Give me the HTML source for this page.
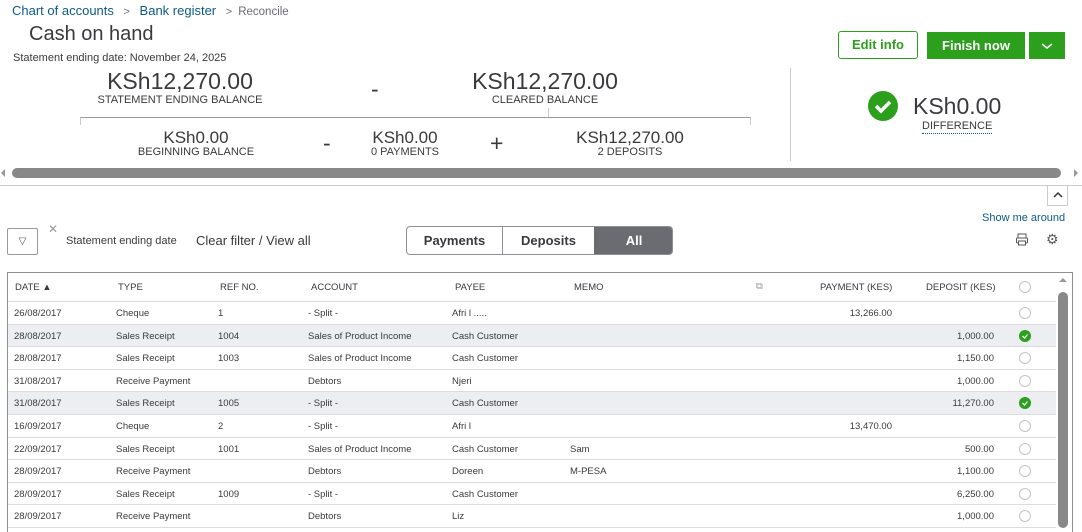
<!DOCTYPE html><html><head><style>
*{margin:0;padding:0;box-sizing:border-box}
body{width:1082px;height:528px;overflow:hidden;background:#fff;font-family:"Liberation Sans",sans-serif;color:#393a3d;position:relative}
.a{position:absolute;white-space:nowrap}
.c{text-align:center}
.big{font-size:23px;color:#393a3d}
.med{font-size:17px}
.lb{font-size:11px;color:#393a3d}
.row{position:absolute;left:8px;width:1048px;height:22.6px;border-bottom:1px solid #dcdcdc;font-size:9.5px;color:#393a3d}
.row span{position:absolute;top:6px}
.sh{background:#eceef1}
.circ{position:absolute;left:1011px;top:5px;width:12px;height:12px;border:1px solid #c4c4c4;border-radius:50%;background:#fff}
.chk{position:absolute;left:1011px;top:5px;width:12px;height:12px;border-radius:50%;background:#2ca01c}
.r{text-align:right}
</style></head><body>
<div class="a" style="left:12px;top:3px;font-size:13px;color:#0d5a8a">Chart of accounts <span style="color:#6b6c72;font-size:11px;margin:0 6px">&gt;</span> Bank register <span style="color:#6b6c72;font-size:11px;margin:0 6px">&gt;</span><span style="color:#6b6c72;font-size:11.5px">Reconcile</span></div>
<div class="a" style="left:29px;top:23px;font-size:20px;color:#393a3d">Cash on hand</div>
<div class="a" style="left:13px;top:52px;font-size:11px">Statement ending date: November 24, 2025</div>
<div class="a c big" style="left:80px;top:68px;width:200px">KSh12,270.00</div>
<div class="a c lb" style="left:80px;top:94px;width:200px">STATEMENT ENDING BALANCE</div>
<div class="a big" style="left:371px;top:76px">-</div>
<div class="a c big" style="left:445px;top:68px;width:200px">KSh12,270.00</div>
<div class="a c lb" style="left:445px;top:94px;width:200px">CLEARED BALANCE</div>
<div class="a" style="left:80px;top:117px;width:671px;height:8px;border-top:1px solid #999;border-left:1px solid #ccc;border-right:1px solid #ccc"></div>
<div class="a" style="left:548px;top:108px;width:1px;height:9px;background:#ccc"></div>
<div class="a c med" style="left:96px;top:128px;width:200px">KSh0.00</div>
<div class="a c lb" style="left:96px;top:146px;width:200px">BEGINNING BALANCE</div>
<div class="a big" style="left:323px;top:130px">-</div>
<div class="a c med" style="left:355px;top:128px;width:100px">KSh0.00</div>
<div class="a c lb" style="left:355px;top:146px;width:100px">0 PAYMENTS</div>
<div class="a big" style="left:490px;top:130px">+</div>
<div class="a c med" style="left:530px;top:128px;width:200px">KSh12,270.00</div>
<div class="a c lb" style="left:530px;top:146px;width:200px">2 DEPOSITS</div>
<div class="a" style="left:790px;top:68px;width:1px;height:93px;background:#ccc"></div>
<div class="a" style="left:838px;top:31px;width:80px;height:28px;border:1px solid #2ca01c;border-radius:3px;color:#2ca01c;font-size:13px;font-weight:bold;text-align:center;line-height:26px">Edit info</div>
<div class="a" style="left:927px;top:32px;width:98px;height:27px;background:#2ca01c;color:#fff;font-size:13px;font-weight:bold;text-align:center;line-height:27px">Finish now</div>
<div class="a" style="left:1029px;top:32px;width:36px;height:27px;background:#2ca01c"><svg width="36" height="27"><path d="M13 12l5 4 5-4" stroke="#fff" stroke-width="1.5" fill="none"/></svg></div>
<div class="a" style="left:868px;top:91px;width:30px;height:30px;border-radius:50%;background:#2ca01c"><svg width="30" height="30"><path d="M8 15l5 5 9-9" stroke="#fff" stroke-width="3.5" fill="none"/></svg></div>
<div class="a" style="left:913px;top:93px;font-size:23px">KSh0.00</div>
<div class="a" style="left:922px;top:120px;font-size:11px;border-bottom:1px dotted #0d5a8a;line-height:13px">DIFFERENCE</div>
<div class="a" style="left:1px;top:169px;border:4px solid transparent;border-right-color:#999;border-left:0"></div>
<div class="a" style="left:12px;top:168px;width:1049px;height:10px;background:#888;border-radius:5px"></div>
<div class="a" style="left:1074px;top:169px;border:4px solid transparent;border-left-color:#999;border-right:0"></div>
<div class="a" style="left:0;top:185px;width:1082px;height:1px;background:#ccc"></div>
<div class="a" style="left:1047px;top:185px;width:21px;height:21px;border:1px solid #ccc;border-top:0"><svg width="20" height="20"><path d="M6 12l4-4 4 4" stroke="#333" stroke-width="1.5" fill="none"/></svg></div>
<div class="a" style="left:982px;top:212px;font-size:11px;color:#0d5a8a">Show me around</div>
<div class="a" style="left:7px;top:228px;width:31px;height:27px;border:1px solid #999;border-radius:2px;font-size:10px;text-align:center;line-height:25px;color:#555">▽</div>
<div class="a" style="left:48px;top:222px;font-size:12px;color:#999">✕</div>
<div class="a" style="left:66px;top:235px;font-size:11px">Statement ending date</div>
<div class="a" style="left:196px;top:233px;font-size:13px">Clear filter / View all</div>
<div class="a" style="left:406px;top:226px;width:267px;height:29px;border:1px solid #8d9096;border-radius:4px;overflow:hidden;font-size:13px;font-weight:bold">
<div class="a c" style="left:0;top:0;width:96px;height:27px;line-height:27px;border-right:1px solid #8d9096">Payments</div>
<div class="a c" style="left:96px;top:0;width:91px;height:27px;line-height:27px">Deposits</div>
<div class="a c" style="left:187px;top:0;width:80px;height:27px;line-height:27px;background:#6b6c72;color:#fff">All</div></div>
<div class="a" style="left:1015px;top:232px"><svg width="16" height="16"><rect x="3" y="2" width="8" height="4" fill="none" stroke="#555"/><rect x="1.5" y="6" width="11" height="5" rx="1" fill="none" stroke="#555"/><rect x="3.5" y="9" width="7" height="4" fill="#fff" stroke="#555"/></svg></div>
<div class="a" style="left:1046px;top:231px;font-size:14px;color:#555">⚙</div>
<div class="a" style="left:7px;top:272px;width:1066px;height:260px;border:1px solid #8d9096;border-bottom:0"></div>
<div class="row" style="top:273px;height:29px;font-size:9.5px;color:#393a3d;font-weight:normal">
<span style="left:7px;top:9px">DATE ▲</span><span style="left:110px;top:9px">TYPE</span><span style="left:212px;top:9px">REF NO.</span><span style="left:303px;top:9px">ACCOUNT</span><span style="left:447px;top:9px">PAYEE</span><span style="left:566px;top:9px">MEMO</span><span style="left:748px;top:8px;color:#999">⧉</span><span style="left:812px;top:9px">PAYMENT (KES)</span><span style="left:918px;top:9px">DEPOSIT (KES)</span><div class="circ" style="top:8px"></div></div>
<div class="a" style="left:1058px;top:292px;width:10px;height:236px;background:#888;border-radius:5px"></div>
<div class="a" style="left:1059px;top:278px;border:4px solid transparent;border-bottom-color:#999;border-top:0"></div>
<div class="row" style="top:302px"><span style="left:6px">26/08/2017</span><span style="left:108px">Cheque</span><span style="left:210px">1</span><span style="left:300px">- Split -</span><span style="left:444px">Afri l  .....</span><span class="r" style="left:784px;width:100px">13,266.00</span><div class="circ"></div></div>
<div class="row sh" style="top:324.6px"><span style="left:6px">28/08/2017</span><span style="left:108px">Sales Receipt</span><span style="left:210px">1004</span><span style="left:300px">Sales of Product Income</span><span style="left:444px">Cash Customer</span><span class="r" style="left:886px;width:100px">1,000.00</span><div class="chk"><svg width="12" height="12" style="position:absolute;left:0;top:0"><path d="M3.5 6l2 2 3-3.5" stroke="#fff" stroke-width="1.3" fill="none"/></svg></div></div>
<div class="row" style="top:347.2px"><span style="left:6px">28/08/2017</span><span style="left:108px">Sales Receipt</span><span style="left:210px">1003</span><span style="left:300px">Sales of Product Income</span><span style="left:444px">Cash Customer</span><span class="r" style="left:886px;width:100px">1,150.00</span><div class="circ"></div></div>
<div class="row" style="top:369.8px"><span style="left:6px">31/08/2017</span><span style="left:108px">Receive Payment</span><span style="left:300px">Debtors</span><span style="left:444px">Njeri</span><span class="r" style="left:886px;width:100px">1,000.00</span><div class="circ"></div></div>
<div class="row sh" style="top:392.4px"><span style="left:6px">31/08/2017</span><span style="left:108px">Sales Receipt</span><span style="left:210px">1005</span><span style="left:300px">- Split -</span><span style="left:444px">Cash Customer</span><span class="r" style="left:886px;width:100px">11,270.00</span><div class="chk"><svg width="12" height="12" style="position:absolute;left:0;top:0"><path d="M3.5 6l2 2 3-3.5" stroke="#fff" stroke-width="1.3" fill="none"/></svg></div></div>
<div class="row" style="top:415px"><span style="left:6px">16/09/2017</span><span style="left:108px">Cheque</span><span style="left:210px">2</span><span style="left:300px">- Split -</span><span style="left:444px">Afri l</span><span class="r" style="left:784px;width:100px">13,470.00</span><div class="circ"></div></div>
<div class="row" style="top:437.6px"><span style="left:6px">22/09/2017</span><span style="left:108px">Sales Receipt</span><span style="left:210px">1001</span><span style="left:300px">Sales of Product Income</span><span style="left:444px">Cash Customer</span><span style="left:562px">Sam</span><span class="r" style="left:886px;width:100px">500.00</span><div class="circ"></div></div>
<div class="row" style="top:460.2px"><span style="left:6px">28/09/2017</span><span style="left:108px">Receive Payment</span><span style="left:300px">Debtors</span><span style="left:444px">Doreen</span><span style="left:562px">M-PESA</span><span class="r" style="left:886px;width:100px">1,100.00</span><div class="circ"></div></div>
<div class="row" style="top:482.8px"><span style="left:6px">28/09/2017</span><span style="left:108px">Sales Receipt</span><span style="left:210px">1009</span><span style="left:300px">- Split -</span><span style="left:444px">Cash Customer</span><span class="r" style="left:886px;width:100px">6,250.00</span><div class="circ"></div></div>
<div class="row" style="top:505.4px"><span style="left:6px">28/09/2017</span><span style="left:108px">Receive Payment</span><span style="left:300px">Debtors</span><span style="left:444px">Liz</span><span class="r" style="left:886px;width:100px">1,000.00</span><div class="circ"></div></div>
</body></html>
